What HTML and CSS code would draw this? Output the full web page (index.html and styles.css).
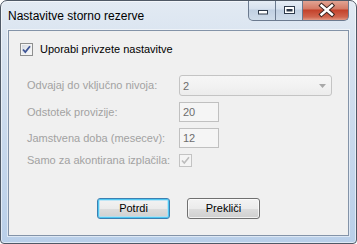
FILE: index.html
```html
<!DOCTYPE html>
<html>
<head>
<meta charset="utf-8">
<link rel="stylesheet" href="styles.css">
</head>
<body>
<div class="window">
  <div class="titlebar">
    <span class="title">Nastavitve storno rezerve</span>
    <div class="caption">
      <div class="cbtn min">
        <svg width="27" height="20" viewBox="0 0 27 20"><rect x="9.5" y="10.5" width="9" height="3.5" fill="#fff" stroke="#2e3a4b" stroke-width="1"/></svg>
      </div>
      <div class="cbtn max">
        <svg width="27" height="20" viewBox="0 0 27 20"><rect x="8.5" y="6.5" width="10" height="7" fill="#fff" stroke="#2e3a4b" stroke-width="1"/><rect x="10.5" y="9" width="6" height="2.5" fill="#2e3a4b"/></svg>
      </div>
      <div class="cbtn close">
        <svg width="46" height="20" viewBox="0 0 46 20"><path d="M18.5 5.5 L29 14.5 M29 5.5 L18.5 14.5" stroke="#3b2520" stroke-width="4.4" stroke-linecap="square"/><path d="M18.5 5.5 L29 14.5 M29 5.5 L18.5 14.5" stroke="#fff" stroke-width="2.4" stroke-linecap="square"/></svg>
      </div>
    </div>
  </div>
  <div class="client">
    <div class="chk-row">
      <span class="chk on"><svg width="11" height="11" viewBox="0 0 11 11"><path d="M2 5.5 L4.3 8 L9 2.2" fill="none" stroke="#3f5595" stroke-width="1.8"/></svg></span>
      <span class="chk-label">Uporabi privzete nastavitve</span>
    </div>
    <div class="form">
      <span class="lbl">Odvajaj do vključno nivoja:</span>
      <div class="combo"><span>2</span><svg width="7" height="4" viewBox="0 0 7 4"><path d="M0 0 H7 L3.5 4 Z" fill="#a8a8a8"/></svg></div>
      <span class="lbl">Odstotek provizije:</span>
      <div class="tb">20</div>
      <span class="lbl">Jamstvena doba (mesecev):</span>
      <div class="tb">12</div>
      <span class="lbl">Samo za akontirana izplačila:</span>
      <span class="chk dis"><svg width="11" height="11" viewBox="0 0 11 11"><path d="M2 5.5 L4.3 8 L9 2.2" fill="none" stroke="#bcbcbc" stroke-width="1.6"/></svg></span>
    </div>
    <div class="buttons">
      <div class="btn default">Potrdi</div>
      <div class="btn">Prekliči</div>
    </div>
  </div>
</div>
</body>
</html>
```

FILE: styles.css
```css
html, body {
  margin: 0;
  padding: 0;
  background: #ffffff;
}
.window {
  box-sizing: border-box;
  width: 357px;
  height: 244px;
  border: 1px solid #4f5966;
  border-radius: 7px 7px 4px 4px;
  background: linear-gradient(180deg, #e2eaf3 0%, #d5e1ef 25%, #c7d8ec 60%, #b9cfe9 100%);
  box-shadow: inset 0 0 0 1px rgba(255,255,255,0.55);
  display: flex;
  flex-direction: column;
  font-family: "Liberation Sans", Arial, sans-serif;
  font-size: 11px;
  overflow: hidden;
}
.titlebar {
  height: 29px;
  display: flex;
  justify-content: space-between;
  align-items: flex-start;
  padding-left: 7px;
  flex: none;
}
.title {
  font-size: 12px;
  color: #000;
  margin-top: 8px;
  line-height: 14px;
}
.caption {
  display: flex;
  margin-right: 7px;
  margin-top: -1px;
  height: 21px;
}
.cbtn {
  box-sizing: border-box;
  height: 21px;
  border: 1px solid #6b7a8f;
  border-top: none;
  border-left: none;
}
.cbtn svg { display: block; }
.min {
  width: 28px;
  border-left: 1px solid #6b7a8f;
  border-radius: 0 0 0 5px;
  background: linear-gradient(180deg, #e7eef6 0%, #d6e1ee 45%, #c1d0e2 50%, #cfdcea 100%);
}
.max {
  width: 27px;
  background: linear-gradient(180deg, #e7eef6 0%, #d6e1ee 45%, #c1d0e2 50%, #cfdcea 100%);
}
.close {
  width: 46px;
  border-radius: 0 0 5px 0;
  background: linear-gradient(180deg, #e3a999 0%, #d47a65 45%, #c3412a 50%, #d0654e 85%, #e09a86 100%);
}
.client {
  flex: 1;
  margin: 0 7px 7px 7px;
  background: #f0f0f0;
  border: 1px solid #8393a8;
  box-shadow: 0 0 0 1px rgba(255,255,255,0.5);
  padding: 12px 11px 0 11px;
  display: flex;
  flex-direction: column;
}
.chk-row {
  display: flex;
  align-items: center;
  gap: 7px;
  height: 13px;
}
.chk {
  box-sizing: border-box;
  width: 13px;
  height: 13px;
  display: flex;
  align-items: center;
  justify-content: center;
}
.chk.on {
  border: 1px solid #8e8f8f;
  background: linear-gradient(135deg, #cfd4dc 0%, #eef0f3 60%, #fafafa 100%);
  box-shadow: inset 0 0 0 1px #f4f4f4;
}
.chk.dis {
  border: 1px solid #c3c3c3;
  background: #f4f4f4;
}
.chk-label { color: #000; line-height: 13px; }
.form {
  margin-top: 19px;
  margin-left: 7px;
  display: grid;
  grid-template-columns: 152px auto;
  row-gap: 6px;
  align-items: center;
  justify-items: start;
}
.lbl {
  color: #a2a2a2;
  line-height: 13px;
}
.combo {
  box-sizing: border-box;
  width: 153px;
  height: 21px;
  border: 1px solid #c4c4c4;
  border-radius: 3px;
  background: linear-gradient(180deg, #f6f6f6 0%, #f2f2f2 50%, #ececec 100%);
  display: flex;
  align-items: center;
  justify-content: space-between;
  padding: 0 5px 0 3px;
  color: #6d6d6d;
}
.tb {
  box-sizing: border-box;
  width: 40px;
  height: 20px;
  border: 1px solid #c0c0c0;
  background: #f5f5f5;
  color: #6d6d6d;
  padding-left: 3px;
  line-height: 18px;
}
.buttons {
  margin-top: 31px;
  display: flex;
  justify-content: center;
  gap: 17px;
}
.btn {
  box-sizing: border-box;
  width: 73px;
  height: 21px;
  border: 1px solid #707070;
  border-radius: 3px;
  background: linear-gradient(180deg, #f3f3f3 0%, #ebebeb 50%, #dddddd 50%, #cfcfcf 100%);
  box-shadow: inset 0 0 0 1px rgba(255,255,255,0.7);
  color: #000;
  text-align: center;
  line-height: 19px;
}
.btn.default {
  border-color: #3c7fb1;
  box-shadow: inset 0 0 0 1px #4fc8f2, inset 0 0 0 2px rgba(170,225,248,0.7);
}
```
